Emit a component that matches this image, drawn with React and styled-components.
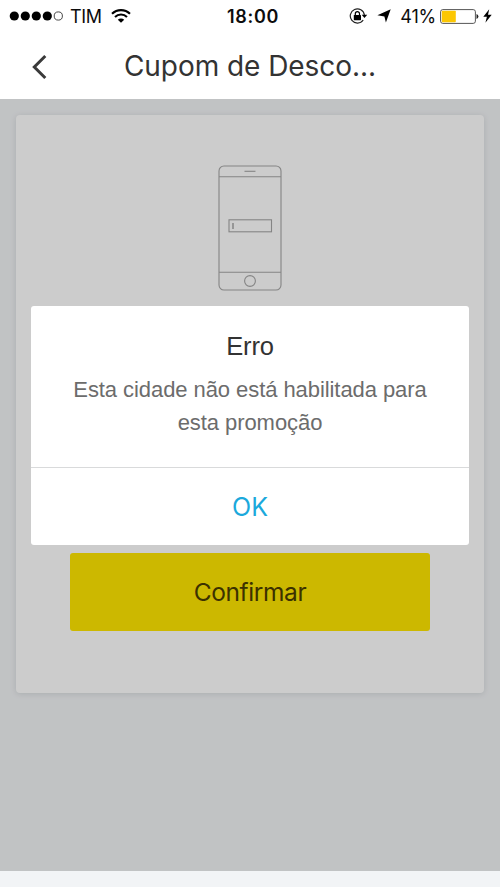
import React from 'react';
import styled, { createGlobalStyle, ThemeProvider } from 'styled-components';

const theme = {
    white: '#ffffff',
    background: '#f2f4f6',
    yellow: '#ffe600',
    link: '#1ba9dc',
    text: '#333333',
    text_secondary: '#6c6c6c',
    overlay: 'rgba(0, 0, 0, 0.2)',
    system: "Inter, 'Liberation Sans', sans-serif",
    dialog: "'Liberation Sans', Arial, sans-serif",
};

const GlobalStyle = createGlobalStyle`
    * {
        box-sizing: border-box;
    }

    body {
        margin: 0;
        background-color: ${theme.background};
    }

    svg {
        display: block;
        flex-shrink: 0;
    }

    button {
        border: none;
        padding: 0;
        cursor: pointer;
    }
`;

const Screen = styled.div`
    height: 100vh;
    display: flex;
    flex-direction: column;
    overflow: hidden;
    font-family: ${({ theme }) => theme.system};
    background-color: ${({ theme }) => theme.background};
`;

const StatusBar = styled.div`
    height: 32px;
    flex-shrink: 0;
    display: grid;
    grid-template-columns: 1fr auto 1fr;
    align-items: center;
    padding: 0 8px 0 9px;
    background-color: ${({ theme }) => theme.white};
    color: #0c0c0c;
`;

const StatusGroup = styled.div`
    display: flex;
    align-items: center;
    justify-content: ${({ $end }) => ($end ? 'flex-end' : 'flex-start')};
    gap: ${({ $gap }) => $gap}px;
`;

const StatusText = styled.span`
    padding-top: 2px;
    font-size: 18px;
    line-height: 30px;
    font-weight: ${({ $bold }) => ($bold ? 600 : 400)};
    letter-spacing: ${({ $spacing }) => $spacing || 0}px;
    white-space: nowrap;
`;

const Clock = styled(StatusText)`
    padding-left: 5px;
`;

const Header = styled.header`
    height: 67px;
    flex-shrink: 0;
    display: grid;
    grid-template-columns: 80px 1fr 80px;
    align-items: center;
    background-color: ${({ theme }) => theme.white};
`;

const BackButton = styled.button`
    width: 80px;
    height: 67px;
    padding: 2px 0 0 31px;
    background: none;
`;

const Title = styled.h1`
    margin: 0;
    padding-top: 2px;
    font-size: 28px;
    line-height: 65px;
    font-weight: 400;
    letter-spacing: -0.05px;
    text-align: center;
    white-space: nowrap;
    color: ${({ theme }) => theme.text};
`;

const Content = styled.main`
    position: relative;
    height: 772px;
    flex-shrink: 0;
    padding: 16px;
`;

const Card = styled.section`
    height: 578px;
    display: flex;
    flex-direction: column;
    align-items: center;
    justify-content: space-between;
    padding: 50px 54px 62px;
    border-radius: 4px;
    background-color: ${({ theme }) => theme.white};
    box-shadow: 0 1px 6px rgba(0, 30, 40, 0.12);
`;

const ConfirmButton = styled.button`
    width: 360px;
    height: 78px;
    border-radius: 3px;
    background-color: ${({ theme }) => theme.yellow};
    font-family: ${({ theme }) => theme.system};
    font-size: 24.5px;
    letter-spacing: -0.4px;
    color: #4c3e00;
`;

const Overlay = styled.div`
    position: absolute;
    inset: 0;
    display: flex;
    align-items: flex-start;
    justify-content: center;
    padding-top: 207px;
    background-color: ${({ theme }) => theme.overlay};
`;

const Dialog = styled.div`
    width: 438px;
    border-radius: 3px;
    overflow: hidden;
    background-color: ${({ theme }) => theme.white};
    font-family: ${({ theme }) => theme.dialog};
    text-align: center;
`;

const DialogBody = styled.div`
    height: 161px;
    padding: 24px 30px 0;
`;

const DialogTitle = styled.h2`
    margin: 0;
    font-size: 25.5px;
    line-height: 32px;
    font-weight: 400;
    letter-spacing: -0.2px;
    color: ${({ theme }) => theme.text};
`;

const DialogText = styled.p`
    margin: 11px 0 0;
    font-size: 22px;
    line-height: 33px;
    letter-spacing: -0.07px;
    color: ${({ theme }) => theme.text_secondary};
`;

const DialogButton = styled.button`
    display: block;
    width: 100%;
    height: 78px;
    border-top: 1px solid #d9dadb;
    background: none;
    font-family: ${({ theme }) => theme.system};
    font-size: 25px;
    color: ${({ theme }) => theme.link};
`;

const SignalIcon = () => (
    <svg width="54" height="10" viewBox="0 0 54 10">
        {[5, 16, 27, 38].map((x) => (
            <circle key={x} cx={x + 0.3} cy="5" r="4.6" fill="#000" />
        ))}
        <circle cx="49.3" cy="5" r="4.1" fill="none" stroke="#333" strokeWidth="0.9" />
    </svg>
);

const WifiIcon = () => (
    <svg width="22" height="14" viewBox="-2 0 22 14" fill="none" stroke="#000" strokeWidth="2.1">
        <path d="M1 4.8A12.8 12.8 0 0 1 19 4.8" />
        <path d="M4 8A8.5 8.5 0 0 1 16 8" />
        <path d="M10 13.8L6.8 10.7A4.6 4.6 0 0 1 13.2 10.7Z" fill="#000" stroke="none" />
    </svg>
);

const RotationLockIcon = () => (
    <svg width="19" height="16" viewBox="0 0 19 16">
        <path d="M14.2 12A7.1 7.1 0 1 1 15.4 7" fill="none" stroke="#222" strokeWidth="1.2" />
        <path d="M12.7 6.8H18.2L15.5 10.1Z" fill="#000" />
        <rect x="4.8" y="7" width="7.2" height="5.2" rx="0.6" fill="#000" />
        <path d="M6.3 7.4V5.7a2.1 2.1 0 0 1 4.2 0V7.4" fill="none" stroke="#000" strokeWidth="1.2" />
    </svg>
);

const LocationIcon = () => (
    <svg width="14" height="14" viewBox="0 0 14 14">
        <path d="M13.7 0.3L8.9 13.5L7.4 7.4L0.4 6.2Z" fill="#000" />
    </svg>
);

const BatteryIcon = () => (
    <svg width="39" height="15" viewBox="0 0 39 15">
        <rect x="0.6" y="0.6" width="34.8" height="13.8" rx="2.2" fill="#fff" stroke="#555" strokeWidth="1" />
        <rect x="1.8" y="1.8" width="14" height="11.4" rx="0.8" fill="#fcc703" />
        <path d="M36.5 5A2.6 2.6 0 0 1 36.5 10Z" fill="#222" />
    </svg>
);

const BoltIcon = () => (
    <svg width="9" height="14" viewBox="0 0 9 14">
        <path d="M6.2 0.2L0.3 7.8H3.9L2.4 13.8L8.7 5.7H5Z" fill="#000" />
    </svg>
);

const BackIcon = () => (
    <svg width="17" height="26" viewBox="0 0 17 26" fill="none" stroke="#3a3a3a" strokeWidth="3">
        <path d="M14.3 2L3.3 13L14.3 24" />
    </svg>
);

const PhoneIllustration = () => (
    <svg width="64" height="126" viewBox="0 0 64 126" fill="none" stroke="#a6a6a6" strokeWidth="1.1">
        <rect x="1" y="1" width="62" height="124" rx="5" />
        <path d="M1 11.8H63M1 107.3H63" />
        <path d="M26.5 6.3H37.5" />
        <rect x="11" y="54.8" width="42.5" height="12" />
        <path d="M15 58V64" strokeWidth="1.5" />
        <circle cx="32" cy="116" r="5.4" />
    </svg>
);

const App = () => {
    return (
        <ThemeProvider theme={theme}>
            <GlobalStyle />
            <Screen>
                <StatusBar>
                    <StatusGroup $gap={7}>
                        <SignalIcon />
                        <StatusText $spacing={-0.3}>TIM</StatusText>
                        <WifiIcon />
                    </StatusGroup>
                    <Clock $bold $spacing={0.7}>18:00</Clock>
                    <StatusGroup $gap={9} $end>
                        <RotationLockIcon />
                        <LocationIcon />
                        <StatusGroup $gap={4}>
                            <StatusText $spacing={-0.2}>41%</StatusText>
                            <BatteryIcon />
                            <BoltIcon />
                        </StatusGroup>
                    </StatusGroup>
                </StatusBar>
                <Header>
                    <BackButton aria-label="Voltar">
                        <BackIcon />
                    </BackButton>
                    <Title>Cupom de Desco...</Title>
                </Header>
                <Content>
                    <Card>
                        <PhoneIllustration />
                        <ConfirmButton>Confirmar</ConfirmButton>
                    </Card>
                    <Overlay>
                        <Dialog role="dialog">
                            <DialogBody>
                                <DialogTitle>Erro</DialogTitle>
                                <DialogText>Esta cidade não está habilitada para esta promoção</DialogText>
                            </DialogBody>
                            <DialogButton>OK</DialogButton>
                        </Dialog>
                    </Overlay>
                </Content>
            </Screen>
        </ThemeProvider>
    );
};

export default App;
